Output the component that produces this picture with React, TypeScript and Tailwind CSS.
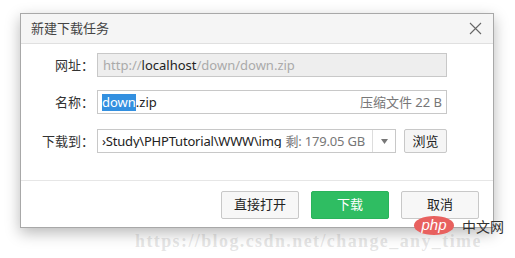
import React from "react";

const font = { fontFamily: '"Noto Sans", "Noto Sans CJK SC", sans-serif' };

export default function App() {
  return (
    <div className="relative w-[515px] h-[258px] bg-white overflow-hidden" style={font}>
      <div className="pl-[20px] pt-[13px]">
        <div className="w-[474px] h-[215px] bg-white border border-[#a8a8a8] shadow-[0_5px_14px_rgba(0,0,0,0.28)] flex flex-col">
          {/* title bar */}
          <div className="h-[30px] bg-[#f5f5f5] border-b border-[#e0e0e0] flex items-center justify-between pl-[10px] pr-[11px] shrink-0">
            <span className="text-[13px] text-[#444] leading-none">新建下载任务</span>
            <svg width="13" height="13" viewBox="0 0 13 13" className="text-[#666]">
              <path d="M1 1 L12 12 M12 1 L1 12" stroke="currentColor" strokeWidth="1.1" fill="none" />
            </svg>
          </div>
          {/* body */}
          <div className="flex flex-col pt-[9px] text-[13px] text-[#333]">
            <div className="flex items-center h-[24px]">
              <div className="w-[73px] text-right leading-none">网址：</div>
              <div className="ml-[3px] w-[350px] h-[24px] bg-[#eeeeee] border border-[#c8c8c8] flex items-center pl-[5px] leading-none">
                <span className="text-[#aaaaaa]">http://</span>
                <span className="text-[#222]">localhost</span>
                <span className="text-[#aaaaaa]">/down/down.zip</span>
              </div>
            </div>
            <div className="flex items-center h-[24px] mt-[13px]">
              <div className="w-[73px] text-right leading-none">名称：</div>
              <div className="ml-[3px] w-[350px] h-[24px] bg-white border border-[#c8c8c8] flex items-center pl-[4px] pr-[4px] leading-none">
                <span className="bg-[#3390e0] text-white h-[17px] flex items-center">down</span>
                <span className="text-[#222]">.zip</span>
                <span className="ml-auto text-[#777]">压缩文件 22 B</span>
              </div>
            </div>
            <div className="flex items-center h-[24px] mt-[15px]">
              <div className="w-[73px] text-right leading-none">下载到：</div>
              <div className="ml-[3px] w-[299px] h-[24px] bg-white border border-[#c8c8c8] flex items-center leading-none">
                <div className="flex-1 flex items-center pl-[4px] overflow-hidden whitespace-nowrap tracking-[-0.2px]">
                  <span className="text-[#222]">›Study\PHPTutorial\WWW\img</span>
                  <span className="ml-[4px] text-[#777]">剩: 179.05 GB</span>
                </div>
                <div className="w-[23px] h-full border-l border-[#dddddd] flex items-center justify-center shrink-0">
                  <svg width="7" height="5" viewBox="0 0 7 5">
                    <path d="M0 0 L7 0 L3.5 5 Z" fill="#777" />
                  </svg>
                </div>
              </div>
              <div className="ml-[8px] w-[43px] h-[24px] bg-[#f5f5f5] border border-[#c8c8c8] rounded-[2px] flex items-center justify-center leading-none text-[#222]">
                浏览
              </div>
            </div>
          </div>
          <div className="mt-[27px] border-t border-[#e6e6e6] flex justify-end gap-[12px] pt-[10px] pr-[14px] text-[13px]">
            <div className="w-[78px] h-[28px] bg-[#f7f7f7] border border-[#c8c8c8] rounded-[2px] flex items-center justify-center text-[#222]">直接打开</div>
            <div className="w-[78px] h-[28px] bg-[#2fbd62] border border-[#2ab35b] rounded-[2px] flex items-center justify-center text-white">下载</div>
            <div className="w-[78px] h-[28px] bg-[#f7f7f7] border border-[#c8c8c8] rounded-[2px] flex items-center justify-center text-[#222]">取消</div>
          </div>
        </div>
      </div>
      {/* watermarks */}
      <div
        className="absolute left-[135px] top-[228px] text-[18px] text-[rgba(120,120,120,0.2)] whitespace-nowrap tracking-[1.4px] font-bold"
        style={{ fontFamily: '"Liberation Serif", serif' }}
      >
        https://blog.csdn.net/change_any_time
      </div>
      <div className="absolute left-[414px] top-[216px] flex items-center">
        <div className="w-[40px] h-[19px] rounded-[50%] bg-[#e8615f] flex items-center justify-center">
          <span className="text-white text-[15px] italic leading-none -mt-[2px]" style={{ fontFamily: '"Liberation Sans", sans-serif' }}>php</span>
        </div>
        <span className="ml-[8px] text-[14px] text-[#333] leading-none" style={{ fontFamily: '"Noto Sans CJK SC", sans-serif' }}>中文网</span>
      </div>
    </div>
  );
}
